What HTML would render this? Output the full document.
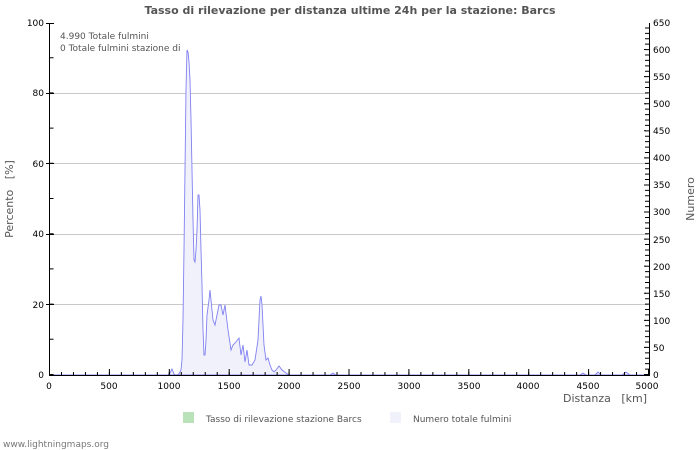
<!DOCTYPE html>
<html><head><meta charset="utf-8"><style>
html,body{margin:0;padding:0;background:#fff;}
svg{display:block;font-family:"DejaVu Sans","Liberation Sans",sans-serif;}
text{white-space:pre;}
</style></head><body>
<svg width="700" height="450" viewBox="0 0 700 450" xmlns="http://www.w3.org/2000/svg">
<rect width="700" height="450" fill="#fff"/>
<text x="350" y="14" text-anchor="middle" font-size="11" font-weight="bold" fill="#555">Tasso di rilevazione per distanza ultime 24h per la stazione: Barcs</text>
<g stroke="#c8c8c8" stroke-width="1">
<line x1="49" y1="93.5" x2="648" y2="93.5"/>
<line x1="49" y1="163.5" x2="648" y2="163.5"/>
<line x1="49" y1="234.5" x2="648" y2="234.5"/>
<line x1="49" y1="304.5" x2="648" y2="304.5"/>
</g>
<polygon fill="#f1f1fc" stroke="#8080f0" stroke-width="0.9" points="49,375 168,375 170,373 172,369 174,374 176,375 179,374 181,370 182,360 183,320 184,250 185,170 186,90 187,50 188,52 189,62 190,80 191,120 192,170 193,220 194,260 195,262 196,250 197,230 198,195 199,195 200,210 201,250 202,285 203,330 204,355 205,355 206,340 207,315 209,300 210,290 211,300 213,320 215,325 217,315 219,305 221,305 223,315 225,305 228,330 231,350 233,345 236,342 239,338 241,355 243,345 245,362 247,350 249,365 252,365 255,360 258,340 260,300 261,296 262,305 264,345 266,360 268,358 270,365 272,370 274,372 276,370 279,366 282,370 286,373 289,375 330,375 333,373 336,375 440,375 580,375 583,373 586,375 595,375 598,372 601,375 622,375 626,372 630,375 648,375"/>
<text x="60" y="39" font-size="9" fill="#555">4.990 Totale fulmini</text>
<text x="60" y="51" font-size="9" fill="#555">0 Totale fulmini stazione di</text>
<g stroke="#000" stroke-width="1">
<line x1="49.5" y1="23" x2="49.5" y2="375"/>
<line x1="649.5" y1="23" x2="649.5" y2="375"/>
<line x1="49" y1="375.5" x2="650" y2="375.5"/>
</g>
<line x1="51.5" y1="375" x2="51.5" y2="23" stroke="#000" stroke-width="4" stroke-dasharray="1 34.2"/>
<g stroke="#000" stroke-width="1">
<line x1="46" y1="23.5" x2="54" y2="23.5"/><line x1="46" y1="93.5" x2="54" y2="93.5"/><line x1="46" y1="163.5" x2="54" y2="163.5"/><line x1="46" y1="234.5" x2="54" y2="234.5"/><line x1="46" y1="304.5" x2="54" y2="304.5"/>
</g>
<line x1="647" y1="375" x2="647" y2="23" stroke="#000" stroke-width="4" stroke-dasharray="1 4.415"/>
<line x1="645" y1="375" x2="645" y2="23" stroke="#000" stroke-width="2" stroke-dasharray="1 26.08"/>
<line x1="49" y1="373.5" x2="649" y2="373.5" stroke="#000" stroke-width="3" stroke-dasharray="1 10.98"/>
<line x1="49" y1="372" x2="649" y2="372" stroke="#000" stroke-width="6" stroke-dasharray="1 58.9"/>
<g font-size="9" fill="#000" text-anchor="end">
<text x="44" y="26">100</text><text x="44" y="96">80</text><text x="44" y="167">60</text><text x="44" y="237">40</text><text x="44" y="308">20</text><text x="44" y="378">0</text>
</g>
<g font-size="9" fill="#000" text-anchor="start">
<text x="653" y="26">650</text><text x="653" y="53">600</text><text x="653" y="80">550</text><text x="653" y="107">500</text><text x="653" y="134">450</text><text x="653" y="161">400</text><text x="653" y="188">350</text><text x="653" y="215">300</text><text x="653" y="243">250</text><text x="653" y="270">200</text><text x="653" y="297">150</text><text x="653" y="324">100</text><text x="653" y="351">50</text><text x="653" y="378">0</text>
</g>
<g font-size="9" fill="#000" text-anchor="middle">
<text x="49" y="389">0</text><text x="109" y="389">500</text><text x="169" y="389">1000</text><text x="229" y="389">1500</text><text x="289" y="389">2000</text><text x="349" y="389">2500</text><text x="409" y="389">3000</text><text x="469" y="389">3500</text><text x="528" y="389">4000</text><text x="588" y="389">4500</text><text x="647" y="389">5000</text>
</g>
<text x="647" y="402" font-size="11" fill="#555" text-anchor="end">Distanza   [km]</text>
<text transform="translate(13,199) rotate(-90)" font-size="11" fill="#555" text-anchor="middle">Percento   [%]</text>
<text transform="translate(694,199) rotate(-90)" font-size="11" fill="#555" text-anchor="middle">Numero</text>
<rect x="183" y="412" width="11" height="11" fill="#b9e2b9"/>
<text x="206" y="422" font-size="9" fill="#555">Tasso di rilevazione stazione Barcs</text>
<rect x="390" y="412" width="11" height="11" fill="#f1f1fc"/>
<text x="413" y="422" font-size="9" fill="#555">Numero totale fulmini</text>
<text x="3" y="447" font-size="9" fill="#777">www.lightningmaps.org</text>
</svg>
</body></html>
